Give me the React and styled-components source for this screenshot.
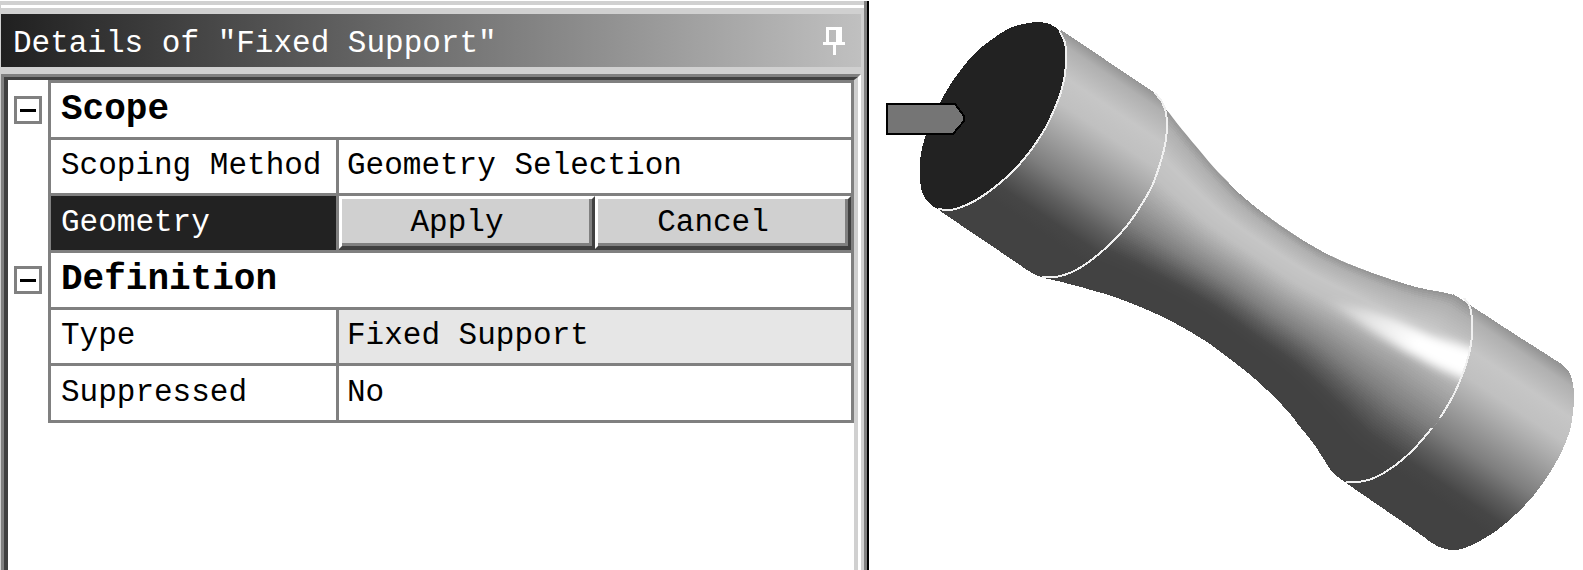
import React, { useState } from 'react';
import styled, { createGlobalStyle, css } from 'styled-components';

const GlobalStyle = createGlobalStyle`
    * {
        box-sizing: border-box;
    }
    body {
        margin: 0;
        background: #FFFFFF;
        font-family: "Liberation Mono", "Courier New", monospace;
        font-size: 31px;
        line-height: 36px;
        color: #000000;
    }
    button {
        font: inherit;
        color: inherit;
        cursor: pointer;
    }
`;

const Workspace = styled.main`
    display: grid;
    grid-template-columns: 869fr 714fr;
    min-height: 100vh;
`;

const Panel = styled.section`
    display: flex;
    flex-direction: column;
    margin-top: 1px;
    padding-left: 1px;
    background: #D0D0D0;
    border-right: 2px solid #000000;
    box-shadow: inset -3px 0 #808080;
`;

const PanelEdge = styled.div`
    height: 3px;
    margin: 4px 3px 6px 0;
    background: #FFFFFF;
`;

const TitleBar = styled.header`
    display: flex;
    align-items: center;
    justify-content: space-between;
    height: 53px;
    margin-right: 6px;
    padding: 0 16px 0 12px;
    background: linear-gradient(90deg, #202020, #C0C0C0);
    color: #FFFFFF;
`;

const Title = styled.h1`
    margin: 0;
    padding-top: 6px;
    font-size: 31px;
    font-weight: normal;
    white-space: pre;
`;

const PinButton = styled.button`
    display: flex;
    padding: 0;
    border: none;
    background: none;
`;

const Sheet = styled.div`
    flex: 1;
    margin: 7px 6px 0 0;
    border-style: solid;
    border-width: 3px 3px 0 3px;
    border-color: #808080 #FFFFFF #808080 #808080;
    background: #FFFFFF;
`;

const SheetInner = styled.div`
    height: 100%;
    border-style: solid;
    border-width: 3px 4px 0 4px;
    border-color: #404040 #D0D0D0 #404040 #404040;
`;

const Table = styled.table`
    width: 100%;
    height: 343px;
    table-layout: fixed;
    border-spacing: 0;
    border-right: 3px solid #808080;
    tr {
        height: 56px;
    }
    tbody:last-child tr:last-child {
        height: 59px;
    }
    tbody:last-child tr:last-child > :not(:first-child) {
        border-bottom: 3px solid #808080;
    }
`;

const GutterCol = styled.col`
    width: 40px;
`;

const LabelCol = styled.col`
    width: 288px;
`;

const Gutter = styled.td`
    padding: 3px 0 0;
`;

const cell = css`
    padding: 0 0 0 10px;
    border-top: 3px solid #808080;
    border-left: 3px solid #808080;
    text-align: left;
    font-weight: normal;
    white-space: nowrap;
`;

const Group = styled.th`
    ${cell}
    font-size: 36px;
    font-weight: bold;
`;

const Label = styled.th`
    ${cell}
    background: ${props => props.$selected ? '#222222' : '#FFFFFF'};
    color: ${props => props.$selected ? '#FFFFFF' : '#000000'};
`;

const Value = styled.td`
    ${cell}
    padding-left: 8px;
    background: ${props => props.$readOnly ? '#E6E6E6' : '#FFFFFF'};
`;

const ActionCell = styled(Value)`
    padding: 0;
    background: #404040;
    vertical-align: top;
`;

const Actions = styled.div`
    display: flex;
`;

const ActionButton = styled.button`
    flex: 1;
    height: 53px;
    padding: 0 20px 0 0;
    border: 3px solid;
    border-color: #FFFFFF #404040 #404040 #FFFFFF;
    background: #D0D0D0;
    box-shadow: inset -3px -3px #808080;
`;

const Toggle = styled.button`
    display: flex;
    align-items: center;
    justify-content: center;
    width: 28px;
    height: 28px;
    margin: 0 auto;
    padding: 0;
    border: 3px solid #808080;
    background: #FFFFFF;
`;

const Viewport = styled.section`
    display: flex;
    align-items: flex-start;
    svg {
        width: 100%;
        height: auto;
    }
`;

const groups = [
    {
        name: 'Scope',
        rows: [
            { label: 'Scoping Method', value: 'Geometry Selection' },
            { label: 'Geometry', editing: true },
        ],
    },
    {
        name: 'Definition',
        rows: [
            { label: 'Type', value: 'Fixed Support', readOnly: true },
            { label: 'Suppressed', value: 'No' },
        ],
    },
];

const PinIcon = () => (
    <svg width="22" height="28" viewBox="0 0 22 28" fill="#FFFFFF" shapeRendering="crispEdges" aria-hidden="true">
        <path d="M3 0H19V15H22V18H13V28H10V18H0V15H3ZM6 3V15H13V3Z" fillRule="evenodd" />
    </svg>
);

const ToggleIcon = ({ open }) => (
    <svg width="16" height="16" viewBox="0 0 16 16" shapeRendering="crispEdges" aria-hidden="true">
        <path d={open ? 'M0 7H16V10H0Z' : 'M0 7H16V10H0ZM7 0H10V16H7Z'} />
    </svg>
);

// runs a smooth curve through the points
const curve = (points) => points.slice(1).reduce((d, p2, i) => {
    const p1 = points[i];
    const p0 = points[i - 1] || p1;
    const p3 = points[i + 2] || p2;
    const c1 = [p1[0] + (p2[0] - p0[0]) / 6, p1[1] + (p2[1] - p0[1]) / 6];
    const c2 = [p2[0] - (p3[0] - p1[0]) / 6, p2[1] - (p3[1] - p1[1]) / 6];
    return `${d}C${c1} ${c2} ${p2}`;
}, `${points[0]}`);

const faceRim = [
    [1037, 22], [1050, 24], [1060, 32], [1065, 43], [1066, 58], [1065, 74], [1061, 92],
    [1054, 110], [1046, 127], [1036, 143], [1024, 159], [1010, 174], [995, 187], [978, 199],
    [964, 206], [950, 210], [938, 209],
];
const faceBack = [
    [938, 209], [928, 202], [922, 192], [920, 178], [920, 163], [922, 148], [927, 132], [934, 116],
    [942, 99], [952, 82], [963, 67], [976, 52], [991, 40], [1008, 29], [1023, 24], [1037, 22],
];
const leftArc = [
    [1155, 93], [1162, 102], [1166, 113], [1167, 128], [1165, 145], [1160, 164], [1152, 186],
    [1140, 207], [1126, 227], [1109, 245], [1090, 261], [1072, 272], [1056, 277], [1042, 277],
];
const rightArc = [
    [1464, 298], [1470, 307], [1472, 320], [1472, 336], [1469, 354], [1463, 373], [1453, 396],
    [1440, 418], [1432, 428], [1413, 450], [1393, 467], [1374, 478], [1358, 482], [1346, 482],
];
const neckTop = [
    [1155, 93], [1167, 110], [1180, 127], [1200, 151], [1218, 172], [1240, 193], [1260, 210],
    [1283, 227], [1313, 246], [1340, 260], [1373, 273], [1400, 282], [1427, 289], [1453, 294], [1464, 298],
];
const neckBottom = [
    [1346, 482], [1333, 472], [1323, 457], [1313, 442], [1300, 426], [1290, 413], [1273, 395],
    [1250, 374], [1223, 353], [1200, 337], [1160, 315], [1113, 296], [1067, 283], [1042, 277],
];
const farEnd = [
    [1560, 363], [1569, 372], [1573, 384], [1574, 398], [1573, 412], [1570, 430], [1561, 453],
    [1549, 474], [1534, 495], [1516, 514], [1496, 531], [1474, 544], [1455, 550], [1437, 546],
    [1424, 537], [1410, 527],
];

const FACE = `M${curve([...faceRim, ...faceBack.slice(1)])}Z`;
const LEFT_END = `M1061 30L${curve(leftArc)}C1036 276 1028 271 1020 265L940 211L1010 120Z`;
const NECK = `M${curve(neckTop)}L${curve(rightArc)}L${curve(neckBottom)}Z`;
const RIGHT_END = `M1453 294L1470 305L1516 335L${curve(farEnd)}L1346 483Z`;

// top and bottom silhouette points of the neck, section by section
const sections = [
    [1120, 75, 998, 246],
    [1167, 110, 1045, 278],
    [1200, 150, 1090, 289],
    [1240, 194, 1140, 306],
    [1283, 227, 1190, 331],
    [1325, 253, 1233, 363],
    [1370, 272, 1272, 395],
    [1416, 287, 1308, 437],
    [1450, 294, 1328, 466],
    [1470, 305, 1346, 483],
    [1540, 352, 1416, 530],
];

// grey level across a section, from the lit edge to the shaded one
const shades = [
    [0, 150], [0.05, 176], [0.17, 198], [0.28, 192], [0.36, 174], [0.46, 150],
    [0.56, 126], [0.66, 94], [0.75, 70], [0.82, 66], [1, 66],
];

const shadeAt = (t) => {
    const i = Math.max(1, shades.findIndex(item => item[0] >= t));
    const [t0, v0] = shades[i - 1];
    const [t1, v1] = shades[i];
    return Math.round(v0 + (v1 - v0) * (t - t0) / (t1 - t0));
};

const BANDS = 90;

const bands = Array.from({ length: BANDS }, (_, i) => {
    const t = i / BANDS;
    const upper = sections.map(([x0, y0, x1, y1]) => [x0 + (x1 - x0) * t, y0 + (y1 - y0) * t]);
    const lower = sections.map(([, , x, y]) => `${x - 10},${y + 15}`).reverse();
    const v = shadeAt(t);
    return { d: `M${curve(upper)}L${lower.join(' ')}Z`, fill: `rgb(${v},${v},${v})` };
});

const Shade = ({ id, x1, y1, x2, y2 }) => (
    <linearGradient id={id} gradientUnits="userSpaceOnUse" x1={x1} y1={y1} x2={x2} y2={y2}>
        {shades.map(([t, v]) => <stop key={t} offset={t} stopColor={`rgb(${v},${v},${v})`} />)}
    </linearGradient>
);

const Model = () => (
    <svg viewBox="869 0 714 570" shapeRendering="crispEdges" role="img" aria-label="Necked specimen, fixed at one end">
        <defs>
            <Shade id="left" x1={1061} y1={30} x2={939} y2={211} />
            <Shade id="right" x1={1470} y1={305} x2={1348} y2={486} />
            <linearGradient id="shine" gradientUnits="userSpaceOnUse" x1="1325" y1="300" x2="1415" y2="345">
                <stop offset="0" stopColor="#FFFFFF" stopOpacity="0.1" />
                <stop offset="0.5" stopColor="#FFFFFF" stopOpacity="0.6" />
                <stop offset="1" stopColor="#FFFFFF" />
            </linearGradient>
            <clipPath id="neck"><path d={NECK} /></clipPath>
            <filter id="glow" x="-20%" y="-40%" width="140%" height="180%">
                <feGaussianBlur stdDeviation="5" />
            </filter>
        </defs>
        <path d={RIGHT_END} fill="url(#right)" />
        <g clipPath="url(#neck)">
            {bands.map((band, i) => <path key={i} d={band.d} fill={band.fill} />)}
            <path d="M1325 300L1365 309L1395 319L1430 335L1490 354L1480 386L1440 369L1405 351L1370 330Z" fill="url(#shine)" filter="url(#glow)" />
        </g>
        <path d={LEFT_END} fill="url(#left)" />
        <path d={FACE} fill="#222222" />
        <g fill="none" stroke="#F0F0F0" strokeWidth="2">
            <path d={`M${curve(faceRim.slice(2))}`} />
            <path d={`M${curve(leftArc)}`} />
            <path d={`M${curve(rightArc.slice(0, 8))}`} />
            <path d={`M${curve(rightArc.slice(8))}`} />
        </g>
        <path d="M887 104H955L964 116V121L953 134H887Z" fill="#757575" stroke="#000000" strokeWidth="2" />
    </svg>
);

const Details = () => {

    const [closed, setClosed] = useState([]);

    const onToggle = (name) => {
        setClosed(state => state.includes(name) ? state.filter(item => item !== name) : [...state, name])
    }

    return (
        <Panel>
            <PanelEdge />
            <TitleBar>
                <Title>Details of "Fixed Support"</Title>
                <PinButton type="button" aria-label="Pin panel"><PinIcon /></PinButton>
            </TitleBar>
            <Sheet>
                <SheetInner>
                    <Table>
                        <colgroup>
                            <GutterCol />
                            <LabelCol />
                            <col />
                        </colgroup>
                        {groups.map(group => {
                            const open = !closed.includes(group.name);
                            return (
                                <tbody key={group.name}>
                                    <tr>
                                        <Gutter>
                                            <Toggle
                                                type="button"
                                                aria-label={group.name}
                                                aria-expanded={open}
                                                onClick={() => onToggle(group.name)}>
                                                <ToggleIcon open={open} />
                                            </Toggle>
                                        </Gutter>
                                        <Group colSpan={2} scope="rowgroup">{group.name}</Group>
                                    </tr>
                                    {open && group.rows.map(row => (
                                        <tr key={row.label}>
                                            <Gutter />
                                            <Label scope="row" $selected={row.editing}>{row.label}</Label>
                                            {row.editing ? (
                                                <ActionCell>
                                                    <Actions>
                                                        <ActionButton type="button">Apply</ActionButton>
                                                        <ActionButton type="button">Cancel</ActionButton>
                                                    </Actions>
                                                </ActionCell>
                                            ) : (
                                                <Value $readOnly={row.readOnly}>{row.value}</Value>
                                            )}
                                        </tr>
                                    ))}
                                </tbody>
                            )
                        })}
                    </Table>
                </SheetInner>
            </Sheet>
        </Panel>
    )
}

const App = () => (
    <>
        <GlobalStyle />
        <Workspace>
            <Details />
            <Viewport>
                <Model />
            </Viewport>
        </Workspace>
    </>
)

export default App;
